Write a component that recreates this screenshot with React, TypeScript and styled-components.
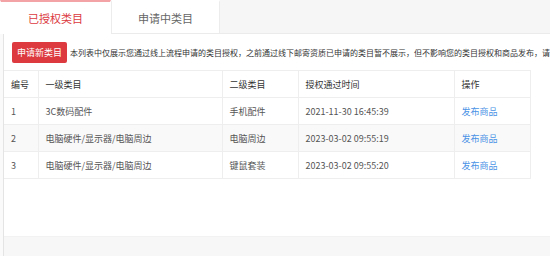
import React from 'react'
import styled, { createGlobalStyle } from 'styled-components';

const variables = {
  red: '#dc3a3f',
  pink: '#f3a3a6',
  blue: '#4a92e6',
  line: '#eeeeee',
  text: '#333333',
  textSecondary: '#555555',
  grayBg: '#f6f6f6'
};

const GlobalStyle = createGlobalStyle`
  html, body {
    margin: 0;
    padding: 0;
    background: #fafafa;
  }
  body {
    font-family: "Noto Sans CJK SC", "Noto Sans", sans-serif;
  }
`;

const Page = styled.div`
  width: 550px;
  height: 256px;
  overflow: hidden;
  display: flex;
  flex-direction: column;
`;

const TabBar = styled.div`
  display: flex;
  height: 34px;
  flex-shrink: 0;
  background: ${ variables.grayBg };
  border-bottom: 1px solid #ebebeb;
  box-sizing: border-box;
`;

const Tab = styled.div<{ $active?: boolean }>`
  width: ${ props => props.$active ? '111px' : '109px' };
  display: flex;
  align-items: center;
  justify-content: center;
  box-sizing: border-box;
  background: #fff;
  font-size: 11px;
  color: ${ props => props.$active ? variables.red : '#666' };
  border-top: 2px solid ${ props => props.$active ? variables.pink : 'transparent' };
  border-right: 1px solid ${ props => props.$active ? 'transparent' : '#ececec' };
  border-left: 1px solid ${ props => props.$active ? 'transparent' : '#ececec' };
  margin-bottom: ${ props => props.$active ? '-1px' : '0' };
`;

const Panel = styled.div`
  flex: 1;
  display: flex;
  flex-direction: column;
  margin-left: 3px;
  width: 546px;
  border-left: 1px solid #e4e4e4;
  border-right: 1px solid #dadada;
  background: #fff;
  overflow: hidden;
`;

const Content = styled.div`
  flex: 1;
  display: flex;
  flex-direction: column;
  gap: 7px;
  padding-top: 8px;
`;

const Toolbar = styled.div`
  display: flex;
  align-items: center;
  gap: 3px;
  padding-left: 8px;
  white-space: nowrap;
  overflow: hidden;
`;

const RedButton = styled.button`
  flex-shrink: 0;
  width: 55px;
  height: 21px;
  padding: 0;
  border: none;
  border-radius: 2px;
  background: ${ variables.red };
  color: #fff;
  font-family: inherit;
  font-size: 9px;
`;

const Notice = styled.span`
  font-size: 8px;
  color: ${ variables.text };
`;

const Table = styled.table`
  width: 526px;
  border-collapse: collapse;
  table-layout: fixed;
  font-size: 9px;
  border-top: 1px solid ${ variables.line };
`;

const Row = styled.tr<{ $striped?: boolean }>`
  height: 27px;
  background: ${ props => props.$striped ? '#f9f9f9' : '#fff' };
`;

const HeadCell = styled.th<{ $w: number }>`
  box-sizing: border-box;
  width: ${ props => props.$w }px;
  text-align: left;
  font-weight: 400;
  color: ${ variables.text };
  padding: 0 0 0 7px;
  border-right: 1px solid ${ variables.line };
  border-bottom: 1px solid ${ variables.line };
`;

const Cell = styled.td`
  box-sizing: border-box;
  padding: 0 0 0 7px;
  color: ${ variables.textSecondary };
  border-right: 1px solid ${ variables.line };
  border-bottom: 1px solid ${ variables.line };
  white-space: nowrap;
`;

const Link = styled.a`
  color: ${ variables.blue };
  text-decoration: none;
`;

const Footer = styled.div`
  height: 19px;
  flex-shrink: 0;
  background: #f7f7f7;
  border-top: 1px solid #f2f2f2;
`;

const columns = [
  { title: '编号', w: 34 },
  { title: '一级类目', w: 184 },
  { title: '二级类目', w: 76 },
  { title: '授权通过时间', w: 156 },
  { title: '操作', w: 76 }
];

const rows = [
  { id: 1, first: '3C数码配件', second: '手机配件', time: '2021-11-30 16:45:39' },
  { id: 2, first: '电脑硬件/显示器/电脑周边', second: '电脑周边', time: '2023-03-02 09:55:19' },
  { id: 3, first: '电脑硬件/显示器/电脑周边', second: '键鼠套装', time: '2023-03-02 09:55:20' }
];

export default function App() {
  return <>
    <GlobalStyle />
    <Page>
      <TabBar>
        <Tab $active>已授权类目</Tab>
        <Tab>申请中类目</Tab>
      </TabBar>
      <Panel>
        <Content>
          <Toolbar>
            <RedButton>申请新类目</RedButton>
            <Notice>本列表中仅展示您通过线上流程申请的类目授权，之前通过线下邮寄资质已申请的类目暂不展示，但不影响您的类目授权和商品发布，请</Notice>
          </Toolbar>
          <Table>
            <thead>
              <Row>
                { columns.map(c => <HeadCell key={ c.title } $w={ c.w }>{ c.title }</HeadCell>) }
              </Row>
            </thead>
            <tbody>
              { rows.map((r, i) =>
                <Row key={ r.id } $striped={ i % 2 === 1 }>
                  <Cell>{ r.id }</Cell>
                  <Cell>{ r.first }</Cell>
                  <Cell>{ r.second }</Cell>
                  <Cell>{ r.time }</Cell>
                  <Cell><Link href="#">发布商品</Link></Cell>
                </Row>
              ) }
            </tbody>
          </Table>
        </Content>
        <Footer />
      </Panel>
    </Page>
  </>
}
